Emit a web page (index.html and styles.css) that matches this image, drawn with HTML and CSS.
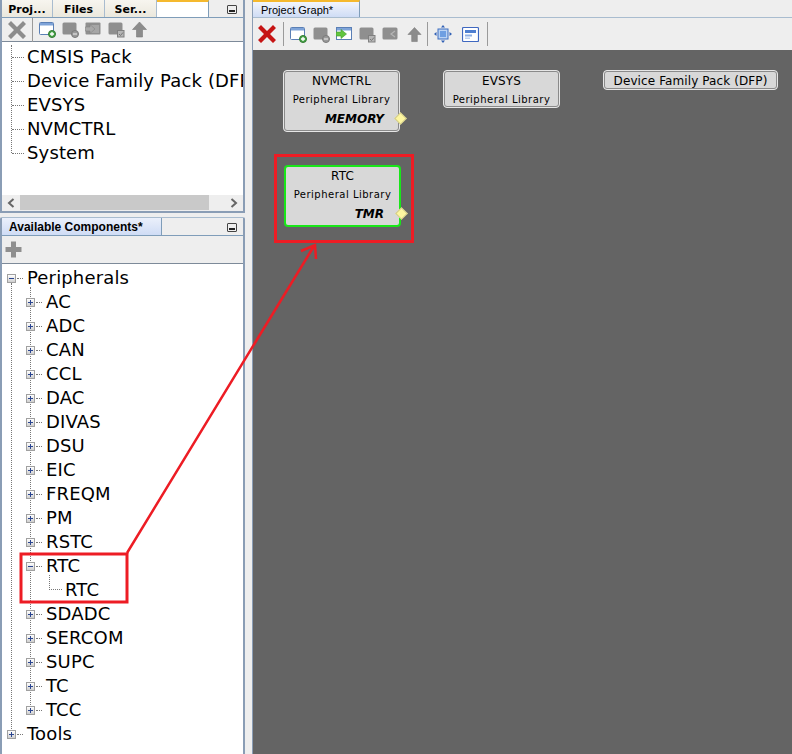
FILE: index.html
```html
<!DOCTYPE html>
<html lang="en">
<head>
<meta charset="utf-8">
<title>Project Graph</title>
<link rel="stylesheet" href="styles.css">
</head>
<body>
<svg class="defs" width="0" height="0" aria-hidden="true">
  <defs>
    <symbol id="x" viewBox="0 0 18 18"><path d="M0 3 3 0 9 6 15 0 18 3 12 9 18 15 15 18 9 12 3 18 0 15 6 9Z" fill="currentColor"/></symbol>
    <symbol id="win" viewBox="0 0 17 17"><rect x=".5" y="1.500" width="14" height="12" rx="1" fill="#fff" stroke="#5a7fb5"/><rect x="1" y="2" width="13" height="2.500" fill="#7ea3d8"/><circle cx="13" cy="13" r="3.500" fill="#4ca64c" stroke="#2f7a2f"/><path d="M11 13h4M13 11v4" stroke="#fff" stroke-width="1.300"/></symbol>
    <symbol id="win-minus" viewBox="0 0 17 17"><rect x=".5" y="1.500" width="14" height="12" rx="1.500" fill="#8f8f8f"/><circle cx="13" cy="13" r="3.500" fill="#9a9a9a" stroke="#7a7a7a"/><path d="M11 13h4" stroke="#ddd" stroke-width="1.300"/></symbol>
    <symbol id="win-arrow" viewBox="0 0 17 17"><rect x=".5" y="1.500" width="15" height="12" rx="1" fill="#8f8f8f"/><rect x="6" y="4" width="8" height="8" fill="#a6a6a6"/><path d="M0 6h5V3.500L10 8l-5 4.500V10H0Z" fill="#a8a8a8" stroke="#858585" stroke-width=".6"/></symbol>
    <symbol id="win-arrow-on" viewBox="0 0 17 17"><rect x=".5" y="1.500" width="15" height="12" fill="#fff" stroke="#5a7fb5"/><rect x="1" y="2" width="14" height="2.500" fill="#7ea3d8"/><path d="M0 6h5V3.500L10.500 8 5 12.500V10H0Z" fill="#62c43e" stroke="#3f9a2a" stroke-width=".6"/></symbol>
    <symbol id="win-check" viewBox="0 0 17 17"><rect x=".5" y="1.500" width="14" height="12" rx="1.500" fill="#8f8f8f"/><rect x="9.500" y="9.500" width="6.500" height="6.500" fill="#b5b5b5" stroke="#808080"/><path d="M11 13l1.500 1.500 2.500-3" fill="none" stroke="#777" stroke-width="1"/></symbol>
    <symbol id="win-back" viewBox="0 0 17 17"><rect x=".5" y="1.500" width="15" height="12" rx="1.500" fill="#8f8f8f"/><path d="M13 5 9 8l4 3" fill="none" stroke="#b5b5b5" stroke-width="1.200"/></symbol>
    <symbol id="up" viewBox="0 0 16 17"><path d="M8 1 15 8.500H11V16H5V8.500H1Z" fill="#8c8c8c" stroke="#7a7a7a" stroke-width=".6"/></symbol>
    <symbol id="fit" viewBox="0 0 18 18"><rect x="4" y="4" width="10" height="10" fill="#bcd4f4" stroke="#3f6fc0"/><rect x="6" y="6" width="6" height="6" fill="#6f9fe2"/><path d="M9 0l2 2.500H7ZM9 18l2-2.500H7ZM0 9l2.500-2v4ZM18 9l-2.500-2v4Z" fill="#2f5fb5"/></symbol>
    <symbol id="panel" viewBox="0 0 17 17"><rect x=".5" y="1.500" width="16" height="14" rx="1" fill="#fff" stroke="#3f68c0" stroke-width="1.200"/><rect x="3" y="4" width="11" height="3" fill="#4f7fd0"/><rect x="3" y="8.500" width="7" height="2" fill="#8fb0e5"/><rect x="3" y="11.500" width="5" height="1.500" fill="#bcd0f0"/></symbol>
    <symbol id="plus-big" viewBox="0 0 17 17"><path d="M6 .5h5V6h5.500v5H11v5.500H6V11H.5V6H6Z" fill="#8f8f8f"/></symbol>
    <symbol id="chev-l" viewBox="0 0 8 10"><path d="M6.500 1 2 5l4.500 4" fill="none" stroke="#666" stroke-width="2"/></symbol>
    <symbol id="chev-r" viewBox="0 0 8 10"><path d="M1.500 1 6 5 1.500 9" fill="none" stroke="#666" stroke-width="2"/></symbol>
  </defs>
</svg>

<div class="app">
  <aside class="side">
    <section class="panel panel-top">
      <div class="tabbar">
        <span class="tab tab-bold tab-proj">Proj...</span>
        <span class="tab tab-bold tab-files">Files</span>
        <span class="tab tab-bold tab-ser">Ser...</span>
        <span class="tab tab-blank"></span>
        <span class="spacer"></span>
        <span class="min-btn"></span>
      </div>
      <div class="toolbar toolbar-side">
        <svg class="ic ic-x grey"><use href="#x"/></svg>
        <span class="sep"></span>
        <svg class="ic"><use href="#win"/></svg>
        <svg class="ic"><use href="#win-minus"/></svg>
        <svg class="ic"><use href="#win-arrow"/></svg>
        <svg class="ic"><use href="#win-check"/></svg>
        <svg class="ic"><use href="#up"/></svg>
      </div>
      <div class="tree tree-top">
        <div class="group group-top">
          <div class="row lv0"><span class="stub"></span>CMSIS Pack</div>
          <div class="row lv0"><span class="stub"></span>Device Family Pack (DFP)</div>
          <div class="row lv0"><span class="stub"></span>EVSYS</div>
          <div class="row lv0"><span class="stub"></span>NVMCTRL</div>
          <div class="row lv0"><span class="stub"></span>System</div>
        </div>
      </div>
      <div class="hscroll">
        <span class="arrow"><svg class="chev"><use href="#chev-l"/></svg></span>
        <span class="thumb"></span>
        <span class="spacer"></span>
        <span class="arrow"><svg class="chev"><use href="#chev-r"/></svg></span>
      </div>
    </section>

    <section class="panel panel-bottom">
      <div class="tabbar">
        <span class="tab tab-bold tab-active">Available Components*</span>
        <span class="spacer"></span>
        <span class="min-btn"></span>
      </div>
      <div class="toolbar toolbar-add">
        <svg class="ic"><use href="#plus-big"/></svg>
      </div>
      <div class="tree tree-bottom">
        <div class="row lv0"><span class="exp minus"></span><span class="stub short"></span>Peripherals</div>
        <div class="group group-root">
          <div class="group group-child">
            <div class="row lv1"><span class="exp plus"></span><span class="stub short"></span>AC</div>
            <div class="row lv1"><span class="exp plus"></span><span class="stub short"></span>ADC</div>
            <div class="row lv1"><span class="exp plus"></span><span class="stub short"></span>CAN</div>
            <div class="row lv1"><span class="exp plus"></span><span class="stub short"></span>CCL</div>
            <div class="row lv1"><span class="exp plus"></span><span class="stub short"></span>DAC</div>
            <div class="row lv1"><span class="exp plus"></span><span class="stub short"></span>DIVAS</div>
            <div class="row lv1"><span class="exp plus"></span><span class="stub short"></span>DSU</div>
            <div class="row lv1"><span class="exp plus"></span><span class="stub short"></span>EIC</div>
            <div class="row lv1"><span class="exp plus"></span><span class="stub short"></span>FREQM</div>
            <div class="row lv1"><span class="exp plus"></span><span class="stub short"></span>PM</div>
            <div class="row lv1"><span class="exp plus"></span><span class="stub short"></span>RSTC</div>
            <div class="row lv1"><span class="exp minus"></span><span class="stub short"></span>RTC</div>
            <div class="row lv2"><span class="elbow"></span>RTC</div>
            <div class="row lv1"><span class="exp plus"></span><span class="stub short"></span>SDADC</div>
            <div class="row lv1"><span class="exp plus"></span><span class="stub short"></span>SERCOM</div>
            <div class="row lv1"><span class="exp plus"></span><span class="stub short"></span>SUPC</div>
            <div class="row lv1"><span class="exp plus"></span><span class="stub short"></span>TC</div>
            <div class="row lv1"><span class="exp plus"></span><span class="stub short"></span>TCC</div>
          </div>
          <div class="row lv0"><span class="exp plus"></span><span class="stub short"></span>Tools</div>
        </div>
      </div>
    </section>
  </aside>

  <main class="graph">
    <div class="tabbar tabbar-graph">
      <span class="tab tab-graph">Project Graph*</span>
    </div>
    <div class="toolbar toolbar-graph">
      <svg class="ic ic-x red"><use href="#x"/></svg>
      <span class="sep"></span>
      <svg class="ic"><use href="#win"/></svg>
      <svg class="ic"><use href="#win-minus"/></svg>
      <svg class="ic"><use href="#win-arrow-on"/></svg>
      <svg class="ic"><use href="#win-check"/></svg>
      <svg class="ic"><use href="#win-back"/></svg>
      <svg class="ic ic-up"><use href="#up"/></svg>
      <span class="sep"></span>
      <svg class="ic ic-fit"><use href="#fit"/></svg>
      <svg class="ic ic-panel"><use href="#panel"/></svg>
      <span class="sep"></span>
    </div>
    <div class="canvas">
      <div class="node node-nvm">
        <div class="node-title">NVMCTRL</div>
        <div class="node-sub">Peripheral Library</div>
        <div class="node-tag">MEMORY</div>
        <span class="port"></span>
      </div>
      <div class="node node-evsys">
        <div class="node-title">EVSYS</div>
        <div class="node-sub">Peripheral Library</div>
      </div>
      <div class="node node-dfp">
        <div class="node-title">Device Family Pack (DFP)</div>
      </div>
      <div class="node node-rtc">
        <div class="node-title">RTC</div>
        <div class="node-sub">Peripheral Library</div>
        <div class="node-tag">TMR</div>
        <span class="port"></span>
      </div>
    </div>
  </main>
</div>

<svg class="annot" width="792" height="754" aria-hidden="true">
  <rect x="21" y="554" width="106" height="48" fill="none" stroke="#ed1c24" stroke-width="3"/>
  <rect x="275.500" y="155.500" width="137" height="86" fill="none" stroke="#ed1c24" stroke-width="3"/>
  <path d="M127 553 314 246M301 251 315 245 316 259" fill="none" stroke="#ed1c24" stroke-width="2.500"/>
</svg>
</body>
</html>
```

FILE: styles.css
```css
* { box-sizing: border-box; }
html, body { margin: 0; padding: 0; }
body {
  width: 792px;
  height: 754px;
  overflow: hidden;
  position: relative;
  background: #eeeeee;
  font-family: "DejaVu Sans", Verdana, sans-serif;
  color: #000;
}
.defs { position: absolute; }
.annot { position: absolute; left: 0; top: 0; pointer-events: none; }
.app { display: flex; width: 792px; height: 754px; }

/* side column */
.side { width: 245px; display: flex; flex-direction: column; flex: none; }
.panel { display: flex; flex-direction: column; }
.panel-top { height: 213px; border-left: 2px solid #8a9db5; border-bottom: 2px solid #8a9db5; border-right: 2px solid #8a9db5; }
.panel-bottom { flex: 1; min-height: 0; margin-top: 4px; border-left: 2px solid #8a9db5; border-right: 2px solid #8a9db5; border-top: 1px solid #a9bccf; border-radius: 2px 2px 0 0; }

.tabbar { height: 18px; display: flex; align-items: stretch; flex: none; border-bottom: 1px solid #7f9db9; background: #eeeeee; }
.tab { display: flex; align-items: center; justify-content: center; font-size: 11px; border-right: 1px solid #a9bccf; background: linear-gradient(#f7f5ef, #ebe8dd); }
.tab-bold { font-weight: 700; font-size: 11px; padding-top: 2px; }
.tab-proj { width: 51px; }
.tab-files { width: 52px; }
.tab-ser { width: 52px; }
.tab-blank { width: 52px; background: #fff; border-top: 2px solid #f5b92e; border-right: 1px solid #7f9db9; }
.tab-active { width: 160px; justify-content: flex-start; padding: 1px 0 0 7px; font-family: "Liberation Sans", sans-serif; font-size: 12px; background: linear-gradient(#ebf0fb, #cfdcf5); border-right: 1px solid #7f9db9; }
.spacer { flex: 1; }
.min-btn { position: relative; width: 10px; height: 9px; margin: 5px 6px 0 0; border: 1px solid #444; background: #eee; border-radius: 1px; }
.min-btn::after { content: ""; position: absolute; left: 1px; right: 1px; bottom: 1px; height: 2px; background: #222; }

.toolbar { display: flex; align-items: center; flex: none; background: #eeeeee; }
.toolbar-side { height: 24px; padding-left: 6px; gap: 6px; border-bottom: 1px solid #7d8a99; }
.toolbar-add { height: 28px; padding-left: 3px; border-bottom: 1px solid #7d8a99; }
.ic { width: 17px; height: 17px; flex: none; }
.ic-x { width: 18px; height: 18px; }
.grey { color: #8c8c8c; }
.red { color: #c61414; }
.sep { width: 1px; height: 24px; background: #9a9a9a; flex: none; }

/* trees */
.tree { background: #fff; font-size: 18px; line-height: 24px; letter-spacing: .15px; overflow: hidden; }
.tree-top { height: 153px; padding-top: 3px; }
.tree-bottom { flex: 1; min-height: 0; padding-top: 2px; }
.row { position: relative; height: 24px; white-space: nowrap; }
.lv0 { padding-left: 25px; }
.lv1 { padding-left: 44px; }
.lv2 { padding-left: 63px; }
.group { position: relative; }
.group::before { content: ""; position: absolute; border-left: 1px dotted #777; }
.group-top::before { left: 9px; top: 0; bottom: 12px; }
.group-root::before { left: 9px; top: -7px; bottom: 17px; }
.group-child::before { left: 28px; top: -3px; bottom: 17px; }
.stub { position: absolute; top: 12px; left: 10px; width: 12px; border-top: 1px dotted #777; }
.stub.short { left: 15px; width: 6px; }
.lv1 .stub.short { left: 34px; }
.elbow { position: absolute; left: 47px; top: -3px; width: 13px; height: 15px; border-left: 1px dotted #777; border-bottom: 1px dotted #777; }
.exp { position: absolute; left: 5px; top: 8px; width: 9px; height: 9px; z-index: 1; border: 1px solid #a0a0a0; background: linear-gradient(#fff, #cfcfcf); }
.lv1 .exp { left: 24px; }
.exp::before, .plus::after { content: ""; position: absolute; background: #2a4590; }
.exp::before { left: 1px; right: 1px; top: 3px; height: 1px; }
.plus::after { top: 1px; bottom: 1px; left: 3px; width: 1px; }

.hscroll { height: 16px; flex: none; display: flex; align-items: stretch; background: #eeeeee; }
.arrow { width: 18px; flex: none; display: flex; align-items: center; justify-content: center; }
.chev { width: 8px; height: 10px; }
.thumb { width: 189px; flex: none; background: #c9c9c9; margin-bottom: 1px; }

/* graph */
.graph { flex: 1; margin-left: 7px; display: flex; flex-direction: column; min-width: 0; border-left: 1px solid #8a9db5; }
.tabbar-graph { background: #eeeeee; border-bottom: 1px solid #a9bccf; }
.tab-graph { width: 107px; justify-content: flex-start; padding-left: 8px; font-family: "Liberation Sans", sans-serif; font-size: 11px; background: linear-gradient(#f2f5fc, #cfdcf5); border-top: 2px solid #f5b92e; border-right: 1px solid #7f9db9; }
.toolbar-graph { height: 32px; padding-left: 5px; gap: 6px; background: #eeeeee; }
.toolbar-graph .ic-x { margin-right: 1px; }
.ic-up { width: 15px; margin-left: 2px; margin-right: -1px; }
.ic-fit { width: 18px; height: 18px; }
.ic-panel { margin-left: 4px; margin-right: 2px; }

.canvas { position: relative; flex: 1; background: #646464; }
.node { position: absolute; width: 117px; background: #d8d8d8; border: 1px solid #e6e6e6; outline: 1px solid #8a8a8a; outline-offset: -2px; border-radius: 4px; text-align: center; }
.node-title { font-size: 12px; line-height: 19px; padding-top: 1px; letter-spacing: .1px; white-space: nowrap; }
.node-sub { font-size: 10px; line-height: 17px; margin-bottom: 2px; letter-spacing: .5px; white-space: nowrap; }
.node-tag { font-size: 12px; font-weight: 700; font-style: italic; line-height: 19px; text-align: right; padding-right: 15px; }
.port { position: absolute; right: -5.500px; top: 42.500px; width: 9px; height: 9px; transform: rotate(45deg); background: #fdf6a0; border: 1px solid #cfc98a; }
.node-nvm { left: 30px; top: 20px; height: 62px; }
.node-evsys { left: 190px; top: 20px; height: 38px; }
.node-dfp { left: 350px; top: 20px; width: 175px; height: 20px; }
.node-rtc { left: 31px; top: 115px; height: 62px; border: 2px solid #19e619; outline: none; }
.node-rtc .node-title { margin-top: -1px; }
.node-rtc .port { right: -6.500px; top: 41.500px; }
```
